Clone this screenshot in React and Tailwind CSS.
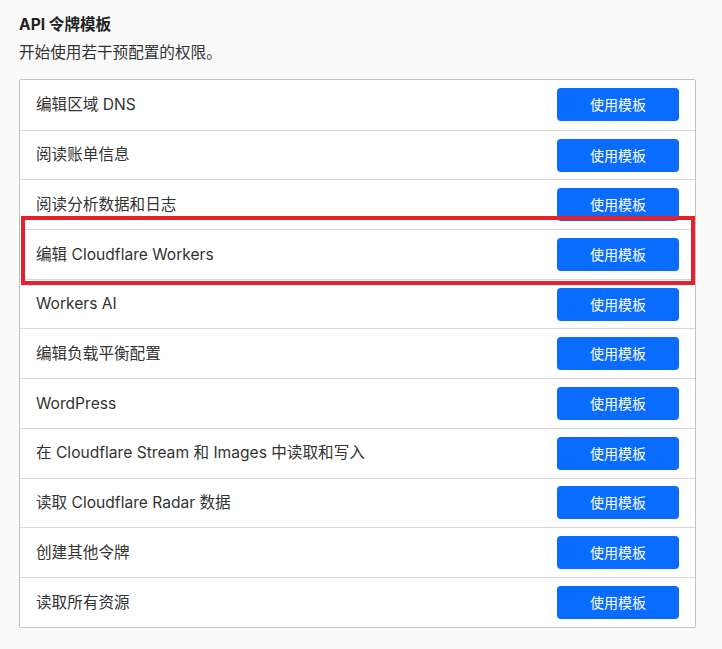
const templates = [
  '编辑区域 DNS',
  '阅读账单信息',
  '阅读分析数据和日志',
  '编辑 Cloudflare Workers',
  'Workers AI',
  '编辑负载平衡配置',
  'WordPress',
  '在 Cloudflare Stream 和 Images 中读取和写入',
  '读取 Cloudflare Radar 数据',
  '创建其他令牌',
  '读取所有资源',
];

export default function App() {
  return (
    <div
      className="min-h-[649px] w-[722px] bg-[#fafafa] px-[19px] pt-[14px] text-[#333]"
      style={{ fontFamily: 'Inter, "Noto Sans CJK SC", sans-serif' }}
    >
      <h2 className="text-[15.6px] font-bold leading-[22px] text-[#222]">API 令牌模板</h2>
      <p className="mt-[6px] text-[15.6px] leading-[22px]">开始使用若干预配置的权限。</p>

      <div className="relative mt-[15px] w-[677px] rounded-[2px] border border-[#c2c2c2] bg-white">
        {templates.map((name, i) => (
          <div
            key={name}
            className={`flex h-[49.7px] items-center justify-between pl-4 pr-4 ${i > 0 ? 'border-t border-[#d9d9d9]' : ''}`}
          >
            <span className="text-[15.6px]">{name}</span>
            <button className="h-[33px] w-[122px] rounded-[4px] bg-[#0a6cff] text-[14px] text-white">
              使用模板
            </button>
          </div>
        ))}
        <div className="pointer-events-none absolute left-[1px] top-[136px] h-[69px] w-[674px] border-4 border-[#e8202a]" />
      </div>
    </div>
  );
}
